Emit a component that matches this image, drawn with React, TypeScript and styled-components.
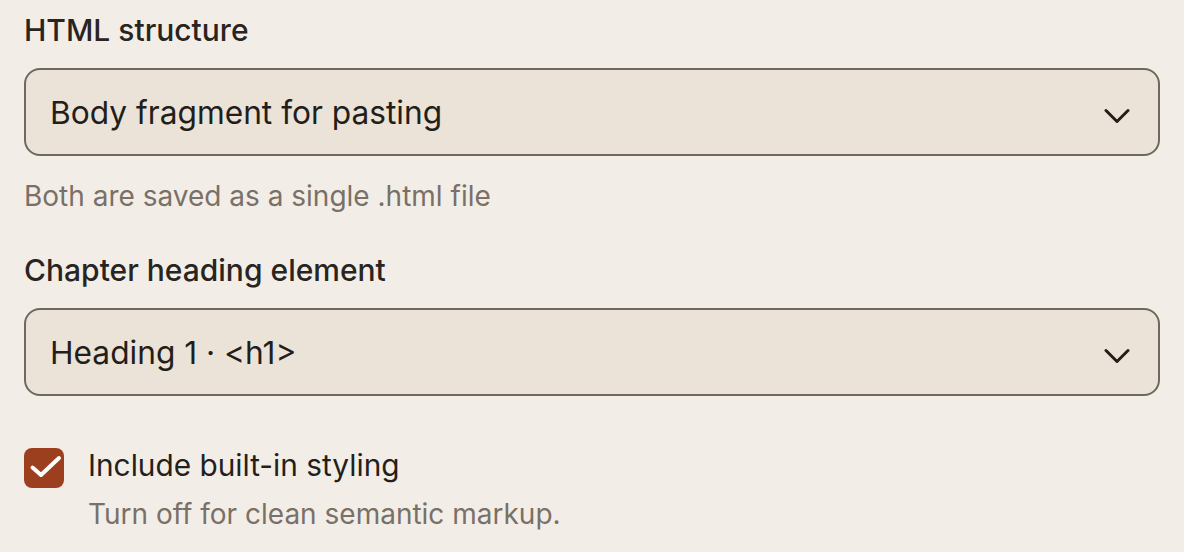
import styled, { createGlobalStyle } from 'styled-components';

const GlobalStyle = createGlobalStyle`
  html, body {
    margin: 0;
    padding: 0;
    background: #f2eee7;
  }
  body {
    font-family: Inter, "Noto Sans", sans-serif;
    color: #241f1b;
  }
`;

// page wrapper
const Panel = styled.div`
  padding: 9px 24px 0 24px;
  display: flex;
  flex-direction: column;
`;

const Field = styled.div<{ $gap?: number }>`
  display: flex;
  flex-direction: column;
  margin-top: ${p => p.$gap ?? 0}px;
`;

const Label = styled.label`
  font-size: 30px;
  font-weight: 500;
  line-height: 42px;
  color: #2a2420;
  margin-bottom: 17px;
`;

const SelectBox = styled.div`
  height: 88px;
  box-sizing: border-box;
  border: 2px solid #70675e;
  border-radius: 16px;
  background: #ebe3d7;
  display: flex;
  align-items: center;
  justify-content: space-between;
  padding: 0 28px 0 24px;
  font-size: 31.7px;
  color: #231e1a;
`;

const Caret = styled.svg`
  margin-top: 8px;
  flex-shrink: 0;
`;

const Hint = styled.p<{ $indent?: number; $top?: number }>`
  margin: ${p => p.$top ?? 0}px 0 0 0;
  font-size: 28px;
  line-height: 40px;
  color: #7a7067;
  padding-left: ${p => p.$indent ?? 0}px;
`;

const CheckRow = styled.div`
  display: flex;
  align-items: flex-start;
  gap: 24px;
`;

const Box = styled.span`
  width: 40px;
  height: 40px;
  border-radius: 8px;
  background: #9c3f1f;
  display: flex;
  flex-shrink: 0;
`;

const CheckText = styled.span`
  font-size: 29.8px;
  line-height: 34px;
  color: #241f1b;
`;

const Chevron = () => (
  <Caret width="26" height="18" viewBox="0 0 26 18" fill="none">
    <path d="M2 3.5 L13 14.5 L24 3.5" stroke="#231e1a" strokeWidth="3" strokeLinecap="round" strokeLinejoin="round" />
  </Caret>
);

const Select = ({ value }: { value: string }) => (
  <SelectBox>
    <span>{value}</span>
    <Chevron />
  </SelectBox>
);

function App() {
  return (
    <>
      <GlobalStyle />
      <Panel>
        <Field>
          <Label>HTML structure</Label>
          <Select value="Body fragment for pasting" />
          <Hint $top={20}>Both are saved as a single .html file</Hint>
        </Field>
        <Field $gap={33}>
          <Label>Chapter heading element</Label>
          <Select value="Heading 1 · <h1>" />
        </Field>
        <Field $gap={52}>
          <CheckRow>
            <Box>
              <svg width="40" height="40" viewBox="0 0 40 40" fill="none">
                <path d="M8.5 19.5 L17 27 L35 10" stroke="#fff" strokeWidth="4" strokeLinecap="round" strokeLinejoin="round" />
              </svg>
            </Box>
            <CheckText>Include built-in styling</CheckText>
          </CheckRow>
          <Hint $indent={64} $top={6}>Turn off for clean semantic markup.</Hint>
        </Field>
      </Panel>
    </>
  );
}

export default App;
